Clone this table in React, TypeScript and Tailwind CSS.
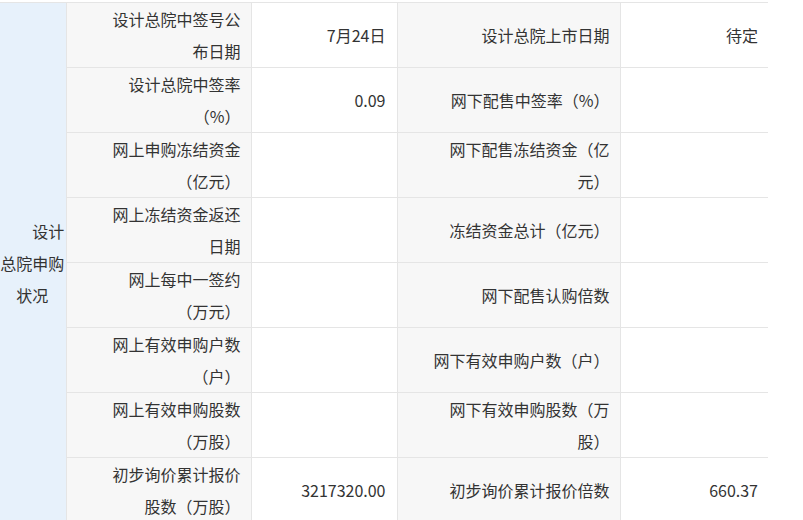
import React from "react";

const rows: [string, string, string, string][] = [
  ["设计总院中签号公布日期", "7月24日", "设计总院上市日期", "待定"],
  ["设计总院中签率（%）", "0.09", "网下配售中签率（%）", ""],
  ["网上申购冻结资金（亿元）", "", "网下配售冻结资金（亿元）", ""],
  ["网上冻结资金返还日期", "", "冻结资金总计（亿元）", ""],
  ["网上每中一签约（万元）", "", "网下配售认购倍数", ""],
  ["网上有效申购户数（户）", "", "网下有效申购户数（户）", ""],
  ["网上有效申购股数（万股）", "", "网下有效申购股数（万股）", ""],
  ["初步询价累计报价股数（万股）", "3217320.00", "初步询价累计报价倍数", "660.37"],
];

export default function App() {
  return (
    <div className="w-[803px] h-[520px] overflow-hidden bg-white pt-[2px] text-[#333] text-[16px] leading-[32px] font-['Noto_Sans_CJK_SC','Noto_Sans',sans-serif]">
      <table className="table-fixed border-collapse w-[768px]">
        <colgroup>
          <col className="w-[66px]" />
          <col className="w-[185px]" />
          <col className="w-[146px]" />
          <col className="w-[223px]" />
          <col className="w-[148px]" />
        </colgroup>
        <tbody>
          {rows.map((r, i) => (
            <tr key={i} className="h-[65px]">
              {i === 0 && (
                <td
                  rowSpan={8}
                  className="border border-[#e5e5e5] border-l-0 bg-[#e7f1fb] text-center align-middle pl-0 pr-[1px] indent-[2em] break-all"
                >
                  设计总院申购状况
                </td>
              )}
              <td className="border border-[#e5e5e5] bg-[#f7f7f7] text-right align-middle pl-[41px] pr-[10px]">
                {r[0]}
              </td>
              <td className="border border-[#e5e5e5] bg-white text-right align-middle pl-[10px] pr-[11px]">
                {r[1]}
              </td>
              <td className="border border-[#e5e5e5] bg-[#f7f7f7] text-right align-middle pl-[31px] pr-[10px]">
                {r[2]}
              </td>
              <td className="border border-[#e5e5e5] border-r-0 bg-white text-right align-middle pl-[10px] pr-[10px]">
                {r[3]}
              </td>
            </tr>
          ))}
        </tbody>
      </table>
    </div>
  );
}
